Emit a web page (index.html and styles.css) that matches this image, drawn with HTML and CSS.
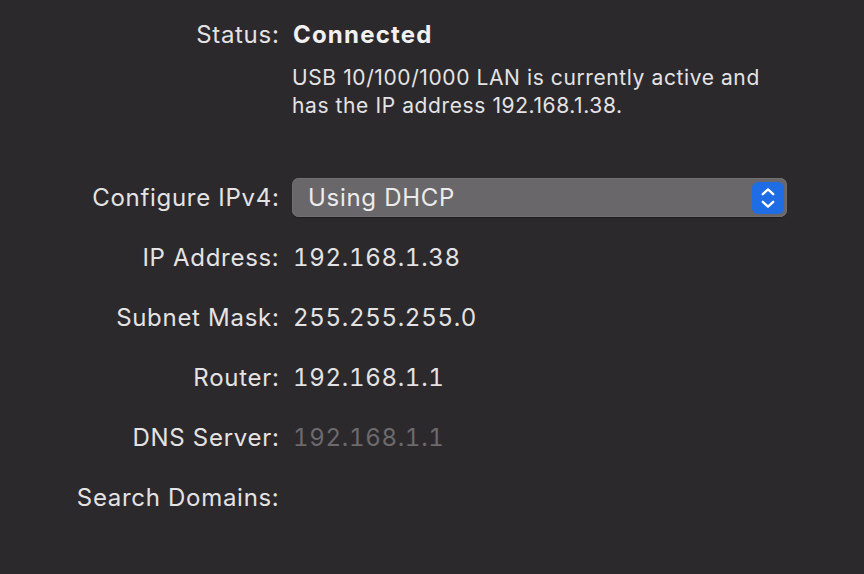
FILE: index.html
```html
<!DOCTYPE html>
<html>
<head>
<meta charset="utf-8">
<link rel="stylesheet" href="styles.css">
</head>
<body>
<div class="panel">
  <div class="status">
    <div class="row status-row">
      <div class="label">Status:</div>
      <div class="value strong">Connected</div>
    </div>
    <div class="row">
      <div class="label"></div>
      <div class="desc">USB 10/100/1000 LAN is currently active and<br>has the IP address 192.168.1.38.</div>
    </div>
  </div>
  <div class="fields">
    <div class="row field">
      <div class="label">Configure IPv4:</div>
      <div class="popup">
        <span class="popup-text">Using DHCP</span>
        <span class="stepper">
          <svg width="20" height="24" viewBox="0 0 20 24"><path d="M4.8 8.2 L10 3.4 L15.2 8.2 M4.8 15.8 L10 20.6 L15.2 15.8" fill="none" stroke="#fff" stroke-width="2.3" stroke-linecap="round" stroke-linejoin="round"/></svg>
        </span>
      </div>
    </div>
    <div class="row field">
      <div class="label">IP Address:</div>
      <div class="value">192.168.1.38</div>
    </div>
    <div class="row field">
      <div class="label">Subnet Mask:</div>
      <div class="value">255.255.255.0</div>
    </div>
    <div class="row field">
      <div class="label">Router:</div>
      <div class="value">192.168.1.1</div>
    </div>
    <div class="row field">
      <div class="label">DNS Server:</div>
      <div class="value dim">192.168.1.1</div>
    </div>
    <div class="row field">
      <div class="label">Search Domains:</div>
      <div class="value"></div>
    </div>
  </div>
</div>
</body>
</html>
```

FILE: styles.css
```css
html, body {
  margin: 0;
  padding: 0;
  background: #2c292d;
  width: 864px;
  height: 574px;
  overflow: hidden;
}
.panel {
  font-family: Inter, "Noto Sans", sans-serif;
  color: #e4e3e4;
  font-size: 24px;
  letter-spacing: 0.7px;
}
.status {
  padding-top: 21px;
  height: 146px;
}
.row {
  display: flex;
}
.label {
  width: 279.5px;
  flex: none;
  text-align: right;
  padding-right: 12.5px;
  box-sizing: content-box;
}
.status-row {
  line-height: 28px;
  height: 43px;
}
.strong {
  font-weight: 700;
  color: #f2f1f2;
  letter-spacing: 1.2px;
}
.desc {
  font-size: 21px;
  line-height: 28px;
  letter-spacing: 0.6px;
}
.field {
  height: 60px;
  align-items: center;
}
.value {
  padding-left: 1px;
  font-variant-numeric: tabular-nums;
}
.dim {
  color: #6c6a6d;
}
.popup {
  width: 495px;
  height: 39px;
  box-sizing: border-box;
  background: #69676a;
  border-radius: 7px;
  box-shadow: 0 0 0 0.5px #7a787b inset, 0 1px 1px rgba(0,0,0,0.3);
  display: flex;
  align-items: center;
  justify-content: space-between;
  padding: 1px 3px 0 16px;
}
.popup-text {
  color: #ececec;
}
.stepper {
  width: 32px;
  height: 32px;
  border-radius: 6px;
  background: #1f6de4;
  display: flex;
  align-items: center;
  justify-content: center;
}
```
